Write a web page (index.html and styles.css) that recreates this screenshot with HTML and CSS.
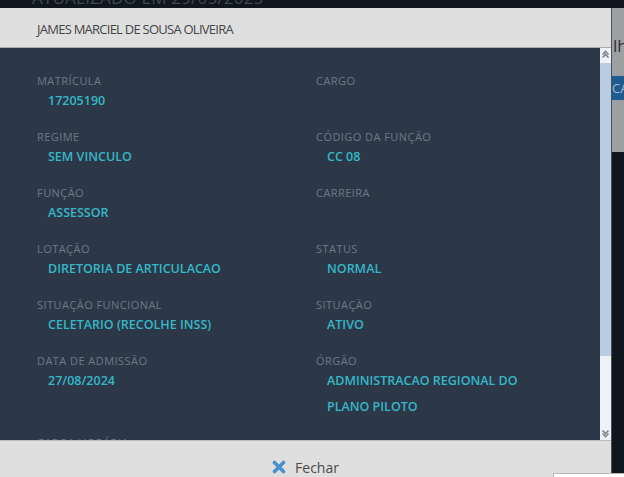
FILE: index.html
```html
<!DOCTYPE html>
<html lang="pt-BR">
<head>
<meta charset="utf-8">
<title>Servidor</title>
<link rel="stylesheet" href="styles.css">
</head>
<body>
<div class="page">
  <div class="page-top"><span class="page-title">ATUALIZADO EM 29/05/2025</span></div>
  <div class="side-card">
    <div class="side-text">lh</div>
    <div class="side-btn">CA</div>
  </div>
</div>

<div class="modal">
  <div class="modal-header">JAMES MARCIEL DE SOUSA OLIVEIRA</div>
  <div class="modal-body">
    <div class="content">
      <div class="grid">
        <div class="field"><div class="label">MATRÍCULA</div><div class="value">17205190</div></div>
        <div class="field"><div class="label">CARGO</div><div class="value"></div></div>
        <div class="field"><div class="label">REGIME</div><div class="value">SEM VINCULO</div></div>
        <div class="field"><div class="label">CÓDIGO DA FUNÇÃO</div><div class="value">CC 08</div></div>
        <div class="field"><div class="label">FUNÇÃO</div><div class="value">ASSESSOR</div></div>
        <div class="field"><div class="label">CARREIRA</div><div class="value"></div></div>
        <div class="field"><div class="label">LOTAÇÃO</div><div class="value">DIRETORIA DE ARTICULACAO</div></div>
        <div class="field"><div class="label">STATUS</div><div class="value">NORMAL</div></div>
        <div class="field"><div class="label">SITUAÇÃO FUNCIONAL</div><div class="value">CELETARIO (RECOLHE INSS)</div></div>
        <div class="field"><div class="label">SITUAÇÃO</div><div class="value">ATIVO</div></div>
        <div class="field"><div class="label">DATA DE ADMISSÃO</div><div class="value">27/08/2024</div></div>
        <div class="field"><div class="label">ÓRGÃO</div><div class="value">ADMINISTRACAO REGIONAL DO<br>PLANO PILOTO</div></div>
        <div class="field"><div class="label">CARGA HORÁRIA</div><div class="value">40</div></div>
      </div>
    </div>
    <div class="scrollbar">
      <svg class="arrow" width="11" height="12" viewBox="0 0 11 12"><path d="M2.5 6.5 L5.5 3.5 L8.5 6.5 M2.5 9.5 L5.5 6.5 L8.5 9.5" fill="none" stroke="#7d838b" stroke-width="1.6"/></svg>
      <div class="track"><div class="thumb"></div></div>
      <svg class="arrow" width="11" height="12" viewBox="0 0 11 12"><path d="M2.5 2.5 L5.5 5.5 L8.5 2.5 M2.5 5.5 L5.5 8.5 L8.5 5.5" fill="none" stroke="#7d838b" stroke-width="1.6"/></svg>
    </div>
  </div>
  <div class="modal-footer">
    <button class="close-btn" type="button">
      <svg width="14" height="14" viewBox="0 0 14 14"><path d="M2.5 2.5 L11.5 11.5 M11.5 2.5 L2.5 11.5" stroke="#4a90d0" stroke-width="3.6" stroke-linecap="round"/></svg>
      <span>Fechar</span>
    </button>
  </div>
</div>

<div class="toast"></div>
</body>
</html>
```

FILE: styles.css
```css
* { box-sizing: border-box; }

html, body {
  margin: 0;
  padding: 0;
  height: 100%;
  overflow: hidden;
}

body {
  background: #10161d;
  font-family: "Open Sans", "Liberation Sans", sans-serif;
}

.page {
  display: flex;
  flex-direction: column;
}

.page-top {
  height: 8px;
  overflow: hidden;
  padding-left: 32px;
}

.page-title {
  display: block;
  margin-top: -11px;
  font-family: "Open Sans", sans-serif;
  font-size: 17px;
  line-height: 17px;
  color: #3e4955;
  letter-spacing: 0.2px;
}

.side-card {
  margin-left: 612px;
  width: 120px;
  height: 144px;
  background: #9d9fa1;
  padding-top: 28px;
}

.side-text {
  font-size: 17px;
  line-height: 20px;
  color: #2f3338;
  padding-left: 1px;
}

.side-btn {
  margin-top: 20px;
  height: 24px;
  background: #1f5b8e;
  color: #9fb8d2;
  font-size: 13px;
  line-height: 24px;
}

.modal {
  position: absolute;
  left: 0;
  top: 8px;
  width: 612px;
  height: 520px;
  background: #dfdfdf;
  border-right: 1px solid #4c5156;
  display: flex;
  flex-direction: column;
}

.modal-header {
  height: 40px;
  padding: 2px 0 0 37px;
  display: flex;
  align-items: center;
  font-size: 13px;
  color: #454545;
  border-bottom: 1px solid #a9adb1;
  letter-spacing: -0.75px;
}

.modal-body {
  height: 393px;
  display: flex;
  border-bottom: 1px solid #b6bcc2;
}

.content {
  flex: 1;
  background: #2c3847;
  overflow: hidden;
  padding: 26px 0 0 37px;
}

.grid {
  display: grid;
  grid-template-columns: 279px 1fr;
  row-gap: 16px;
}

.label {
  font-family: "Open Sans", sans-serif;
  font-size: 11px;
  line-height: 14px;
  color: #6c7886;
  letter-spacing: 0.45px;
}

.value {
  margin-left: 11px;
  min-height: 26px;
  font-size: 12.5px;
  font-weight: 600;
  line-height: 26px;
  color: #35b7c8;
}

.scrollbar {
  width: 11px;
  background: #eef1f5;
  display: flex;
  flex-direction: column;
}

.arrow {
  display: block;
  flex: none;
}

.track {
  flex: 1;
  padding-top: 3px;
}

.thumb {
  height: 293px;
  background: #b8cce2;
  border-radius: 1px;
}

.modal-footer {
  flex: 1;
  display: flex;
  justify-content: center;
  padding-top: 11px;
}

.close-btn {
  display: flex;
  align-items: center;
  gap: 9px;
  height: 30px;
  background: transparent;
  border: 0;
  padding: 0;
  font-family: "Open Sans", sans-serif;
  font-size: 14px;
  color: #4a4a4a;
  cursor: pointer;
}

.toast {
  position: absolute;
  left: 553px;
  top: 473px;
  width: 90px;
  height: 30px;
  background: #ffffff;
  border: 1px solid #b9b9b9;
}
```
